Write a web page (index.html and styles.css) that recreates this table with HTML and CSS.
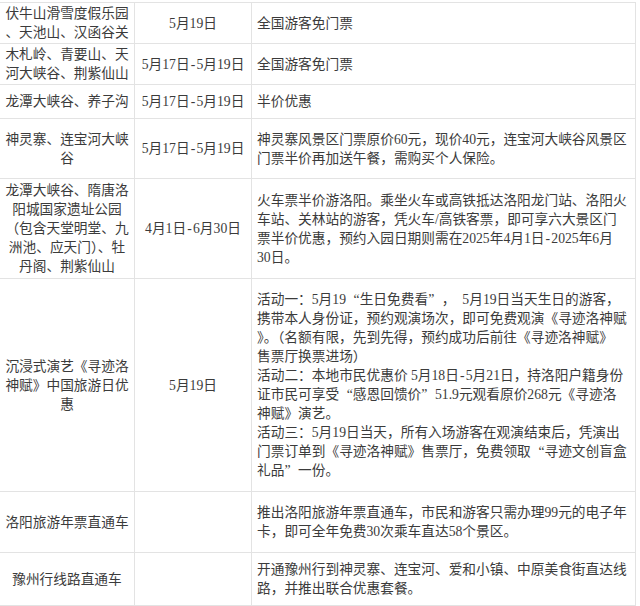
FILE: index.html
```html
<!DOCTYPE html>
<html lang="zh-CN">
<head>
<meta charset="utf-8">
<title>洛阳旅游优惠</title>
<link rel="stylesheet" href="styles.css">
</head>
<body>
<table class="deals">
  <colgroup>
    <col class="c-name">
    <col class="c-date">
    <col class="c-desc">
  </colgroup>
  <tbody>
    <tr class="r1">
      <td class="name">伏牛山滑雪度假乐园<br>、天池山、汉函谷关</td>
      <td class="date">5月19日</td>
      <td class="desc">全国游客免门票</td>
    </tr>
    <tr class="r2">
      <td class="name">木札岭、青要山、天<br>河大峡谷、荆紫仙山</td>
      <td class="date">5月17日<span class="dash">-</span>5月19日</td>
      <td class="desc">全国游客免门票</td>
    </tr>
    <tr class="r3">
      <td class="name">龙潭大峡谷、养子沟</td>
      <td class="date">5月17日<span class="dash">-</span>5月19日</td>
      <td class="desc">半价优惠</td>
    </tr>
    <tr class="r4">
      <td class="name">神灵寨、连宝河大峡<br>谷</td>
      <td class="date">5月17日<span class="dash">-</span>5月19日</td>
      <td class="desc">神灵寨风景区门票原价60元，现价40元，连宝河大峡谷风景区<br>门票半价再加送午餐，需购买个人保险。</td>
    </tr>
    <tr class="r5">
      <td class="name">龙潭大峡谷、隋唐洛<br>阳城国家遗址公园<br>（包含天堂明堂、九<br>洲池、应天门）、牡<br>丹阁、荆紫仙山</td>
      <td class="date">4月1日<span class="dash">-</span>6月30日</td>
      <td class="desc">火车票半价游洛阳。乘坐火车或高铁抵达洛阳龙门站、洛阳火<br>车站、关林站的游客，凭火车/高铁客票，即可享六大景区门<br>票半价优惠，预约入园日期则需在2025年4月1日<span class="dash">-</span>2025年6月<br>30日。</td>
    </tr>
    <tr class="r6">
      <td class="name">沉浸式演艺《寻迹洛<br>神赋》中国旅游日优<br>惠</td>
      <td class="date">5月19日</td>
      <td class="desc">活动一：5月19<span class="q qo">“</span>生日免费看<span class="q qc">”</span>，&nbsp; 5月19日当天生日的游客，<br>携带本人身份证，预约观演场次，即可免费观演《寻迹洛神赋<br>》。（名额有限，先到先得，预约成功后前往《寻迹洛神赋》<br>售票厅换票进场）<br>活动二：本地市民优惠价 5月18日<span class="dash">-</span>5月21日，持洛阳户籍身份<br>证市民可享受<span class="q qo">“</span>感恩回馈价<span class="q qc">”</span>51.9元观看原价268元《寻迹洛<br>神赋》演艺。<br>活动三：5月19日当天，所有入场游客在观演结束后，凭演出<br>门票订单到《寻迹洛神赋》售票厅，免费领取<span class="q qo">“</span>寻迹文创盲盒<br>礼品<span class="q qc">”</span>一份。</td>
    </tr>
    <tr class="r7">
      <td class="name">洛阳旅游年票直通车</td>
      <td class="date"></td>
      <td class="desc">推出洛阳旅游年票直通车，市民和游客只需办理99元的电子年<br>卡，即可全年免费30次乘车直达58个景区。</td>
    </tr>
    <tr class="r8">
      <td class="name">豫州行线路直通车</td>
      <td class="date"></td>
      <td class="desc">开通豫州行到神灵寨、连宝河、爱和小镇、中原美食街直达线<br>路，并推出联合优惠套餐。</td>
    </tr>
  </tbody>
</table>
</body>
</html>
```
FILE: styles.css
```css
html, body {
  margin: 0;
  padding: 0;
  background: #ffffff;
}

body {
  font-family: "Liberation Serif", "Noto Sans CJK SC", serif;
  font-size: 13.7px;
  line-height: 19px;
  color: #3b3b3b;
}

.deals {
  border-collapse: collapse;
  table-layout: fixed;
  width: 636px;
  margin: 2px 0 0 -1px;
}

.c-name { width: 135px; }
.c-date { width: 117px; }
.c-desc { width: 384px; }

.deals td {
  border: 1px solid #e3e3e3;
  vertical-align: middle;
  padding: 0;
  white-space: nowrap;
  overflow: hidden;
}

.deals .name,
.deals .date {
  text-align: center;
}

.deals .desc {
  text-align: left;
  padding-left: 5px;
}

.q {
  display: inline-block;
  width: 1em;
}

.qo {
  text-align: right;
}

.qc {
  text-align: left;
}

.dash {
  display: inline-block;
  width: 0.5em;
  text-align: center;
}

.r1 { height: 41px; }
.r2 { height: 41px; }
.r3 { height: 34px; }
.r4 { height: 60px; }
.r5 { height: 100px; }
.r6 { height: 213px; }
.r7 { height: 61px; }
.r8 { height: 53px; }
```
